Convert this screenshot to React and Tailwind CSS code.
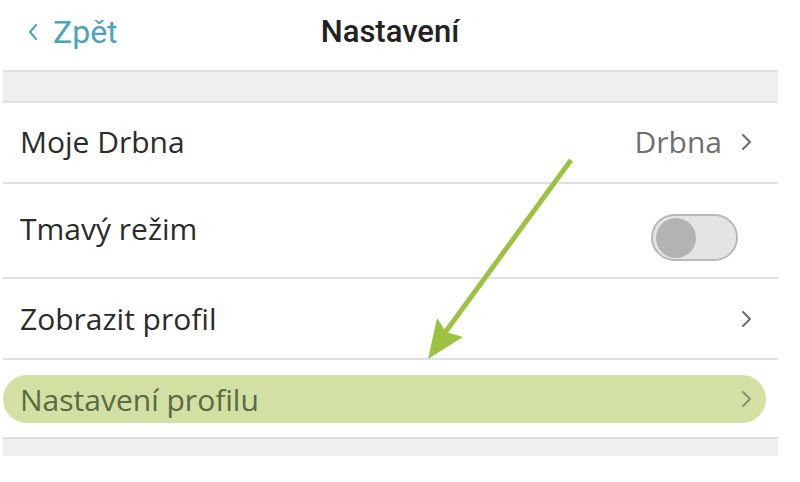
import React from 'react';

const font = { fontFamily: '"Open Sans", "Noto Sans", sans-serif' };

function Chevron({ className = 'stroke-[#6b6b70]' }) {
  return (
    <svg width="12" height="18" viewBox="0 0 12 18" className={className} fill="none">
      <path d="M3 2l7 7-7 7" strokeWidth="2" strokeLinecap="round" strokeLinejoin="round" />
    </svg>
  );
}

function Separator() {
  return <div className="h-[2px] bg-[#e0e0e0]" />;
}

function Toggle() {
  return (
    <div className="w-[87px] h-[47px] rounded-full border-2 border-[#b8b8b8] bg-[#e4e4e4] flex items-center px-[3px]">
      <div className="w-[40px] h-[40px] rounded-full bg-[#b3b3b3]" />
    </div>
  );
}

export default function App() {
  return (
    <div className="relative w-[800px] h-[482px] bg-white overflow-hidden" style={font}>
      {/* Header */}
      <div className="h-[70px] grid grid-cols-3 items-start pt-[10px]" style={{ fontFamily: 'Roboto, sans-serif' }}>
        <div className="flex items-center gap-[15px] pl-[28px] text-[#4aa5b9] text-[32px] leading-[44px]">
          <svg width="10" height="16" viewBox="0 0 10 16" fill="none" className="stroke-[#4aa5b9]">
            <path d="M8 1L2 8l6 7" strokeWidth="2" strokeLinecap="round" strokeLinejoin="round" />
          </svg>
          <span>Zpět</span>
        </div>
        <div className="text-center text-[31px] font-medium text-[#222] leading-[44px] -ml-[20px]">Nastavení</div>
        <div />
      </div>

      <div className="ml-[3px] w-[775px]">
        <div className="h-[33px] bg-[#efefef] border-y-2 border-[#e0e0e0]" />

        <div className="h-[79px] flex items-center justify-between pl-[17px] pr-[26px] text-[30px] text-[#2b2b2b]">
          <span className="-mt-[2px]">Moje Drbna</span>
          <div className="flex items-center gap-[18px] -mt-[2px]">
            <span className="text-[#6e6e73]">Drbna</span>
            <Chevron />
          </div>
        </div>
        <Separator />

        <div className="h-[93px] flex items-center justify-between pl-[17px] pr-[40px] text-[30px] text-[#2b2b2b]">
          <span className="-mt-[4px]">Tmavý režim</span>
          <div className="mt-[14px]">
            <Toggle />
          </div>
        </div>
        <Separator />

        <div className="h-[79px] flex items-center justify-between pl-[17px] pr-[26px] text-[30px] text-[#2b2b2b]">
          <span>Zobrazit profil</span>
          <Chevron />
        </div>
        <Separator />

        <div className="h-[77px] pt-[15px]">
          <div className="h-[48px] w-[763px] rounded-full bg-[#d2e0a4] flex items-center justify-between pl-[17px] pr-[14px] text-[30px] text-[#5b6a40]">
            <span>Nastavení profilu</span>
            <Chevron className="stroke-[#8a9370]" />
          </div>
        </div>
        <div className="h-[19px] bg-[#efefef] border-t-2 border-[#e0e0e0]" />
      </div>

      {/* Annotation arrow */}
      <svg className="absolute left-0 top-0 pointer-events-none" width="800" height="482" viewBox="0 0 800 482">
        <line x1="571" y1="160" x2="444" y2="334" stroke="#9dc243" strokeWidth="5" />
        <polygon points="428,359 437,318 446,332 463,337" fill="#9dc243" />
      </svg>
    </div>
  );
}
